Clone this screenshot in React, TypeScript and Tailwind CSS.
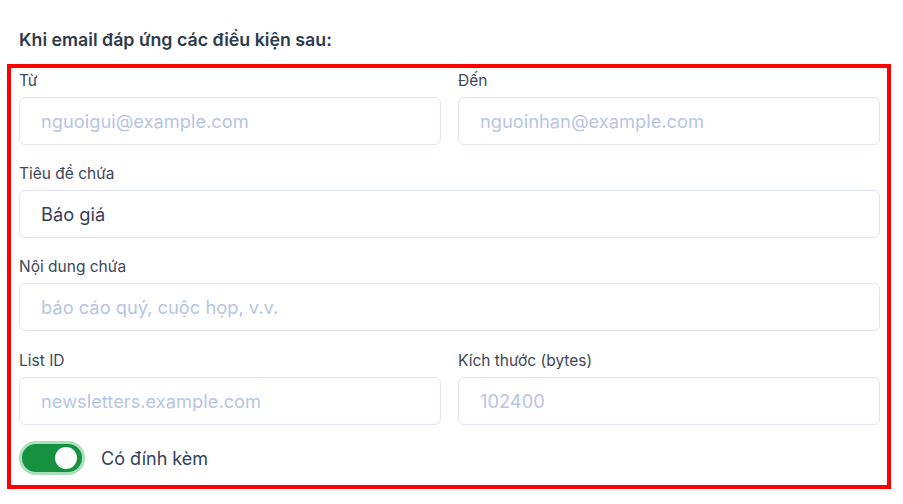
import { useState } from 'react';

type FieldProps = {
    label: string;
    placeholder?: string;
    value?: string;
};

function Field({ label, placeholder, value }: FieldProps) {
    const [text, setText] = useState(value ?? '');
    return (
        <label className="flex flex-col min-w-0">
            <span className="text-[15.5px] leading-[20px] text-[#3c4757] mb-[6px]">{label}</span>
            <input
                value={text}
                onChange={e => setText(e.target.value)}
                placeholder={placeholder}
                className="h-[48px] w-full rounded-md border border-[#e1e6f1] bg-white px-[21px] text-[18.3px] text-[#34405a] placeholder:text-[#b6c6e2] outline-none"
            />
        </label>
    );
}

export default function App() {
    const [hasAttachment, setHasAttachment] = useState(true);

    return (
        <div className="w-[903px] h-[504px] bg-white font-['Inter',sans-serif] overflow-hidden">
            <h2 className="pl-[19px] pt-[28px] text-[17.8px] leading-[24px] font-semibold text-[#2f3a4c]">
                Khi email đáp ứng các điều kiện sau:
            </h2>

            {/* Condition fields */}
            <div className="ml-[7px] mt-[12px] w-[884px] h-[425px] border-4 border-[#ff0000] pl-[8px] pr-[7px] pt-[3px]">
                <div className="grid grid-cols-2 gap-x-[17px]">
                    <Field label="Từ" placeholder="nguoigui@example.com" />
                    <Field label="Đến" placeholder="nguoinhan@example.com" />
                </div>
                <div className="mt-[19px]">
                    <Field label="Tiêu đề chứa" value="Báo giá" />
                </div>
                <div className="mt-[19px]">
                    <Field label="Nội dung chứa" placeholder="báo cáo quý, cuộc họp, v.v." />
                </div>
                <div className="mt-[20px] grid grid-cols-2 gap-x-[17px]">
                    <Field label="List ID" placeholder="newsletters.example.com" />
                    <Field label="Kích thước (bytes)" placeholder="102400" />
                </div>

                <div className="mt-[16px] flex items-center gap-[16px]">
                    <button
                        type="button"
                        role="switch"
                        aria-checked={hasAttachment}
                        onClick={() => setHasAttachment(v => !v)}
                        className={`relative w-[66px] h-[34px] rounded-full border-[3px] border-[#a9dfba] ${hasAttachment ? 'bg-[#16913f]' : 'bg-gray-300'}`}
                    >
                        <span
                            className={`absolute top-1/2 -translate-y-1/2 w-[22px] h-[22px] rounded-full bg-white ${hasAttachment ? 'right-[5px]' : 'left-[5px]'}`}
                        />
                    </button>
                    <span className="text-[18px] text-[#34405a]">Có đính kèm</span>
                </div>
            </div>
        </div>
    );
}
